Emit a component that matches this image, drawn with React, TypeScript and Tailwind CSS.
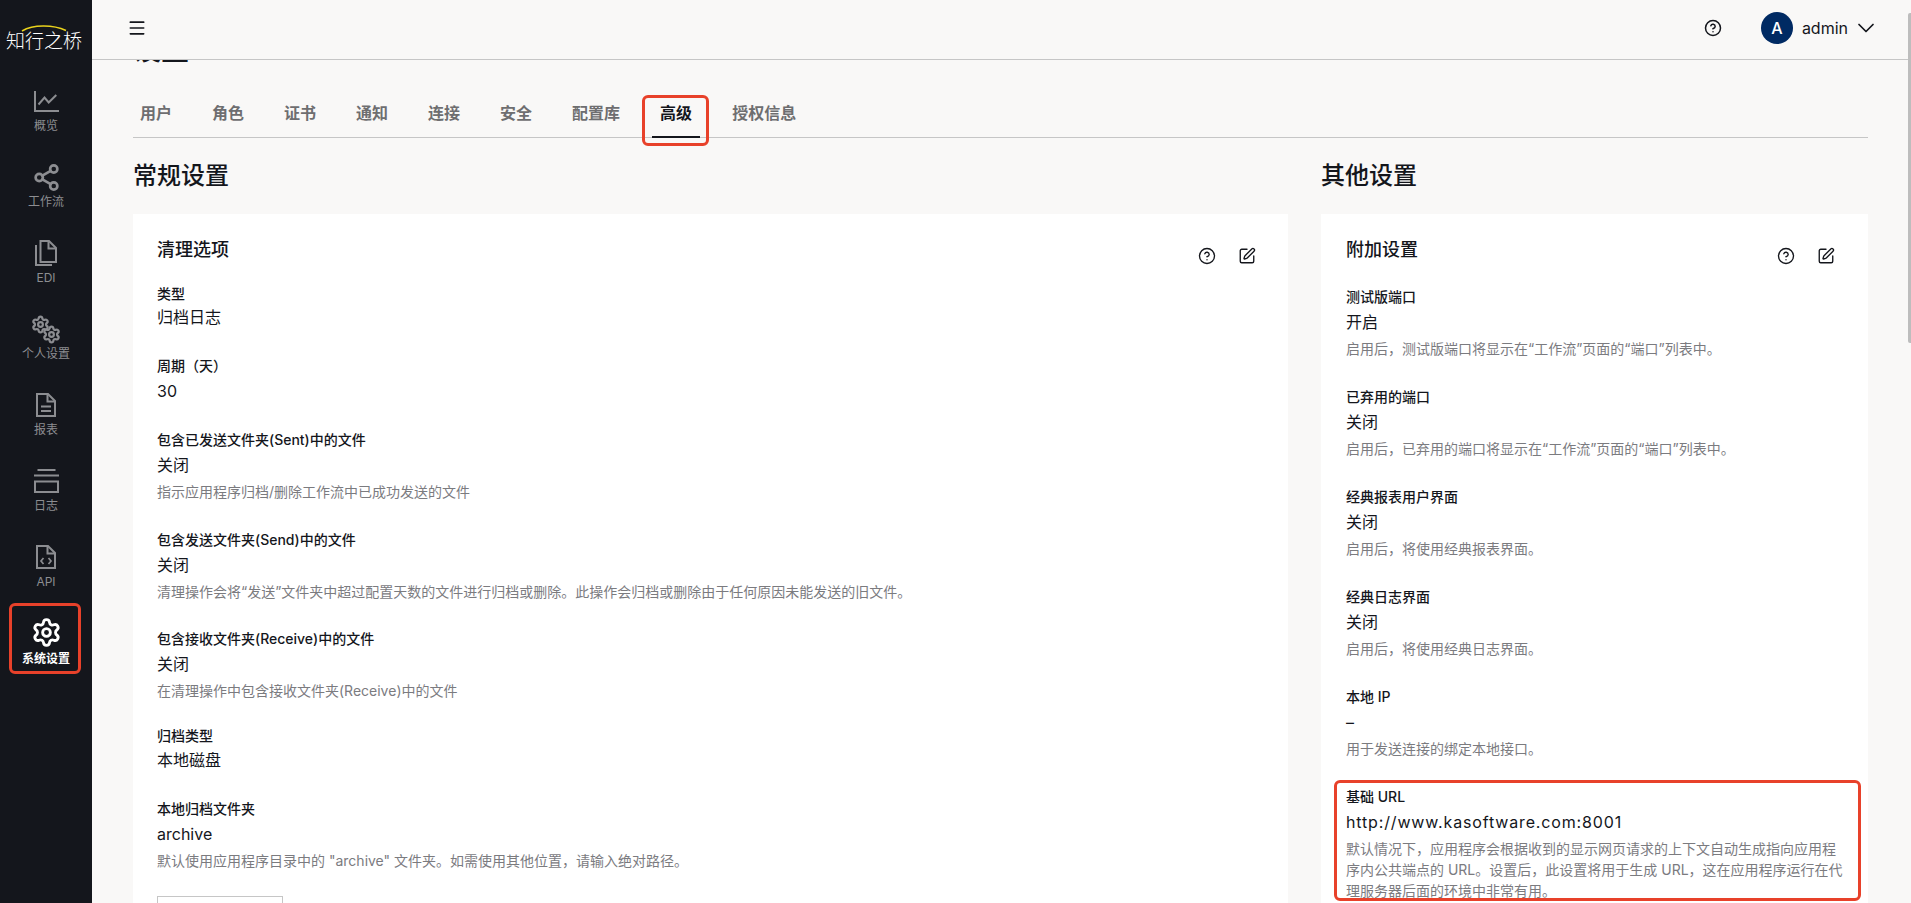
import { ChevronDown, CircleHelp, Menu, Settings, Share2, SquarePen } from "lucide-react";
import type { ReactNode } from "react";

const FONT = "font-['Inter','Noto_Sans_CJK_SC',sans-serif]";

const ChartIcon = () => (
  <svg width="25" height="21" viewBox="0 0 25 21" fill="none" stroke="currentColor" strokeWidth="2">
    <path d="M1 0v20h24" />
    <path d="M4.500 13.500l6-7 4.200 5 7.600-7.500" />
  </svg>
);

const FilesIcon = () => (
  <svg width="22" height="26" viewBox="0 0 22 26" fill="none" stroke="currentColor" strokeWidth="2">
    <path d="M5.500 1h8.500l7 7v14H5.500z" />
    <path d="M13.500 1v7.500H21" />
    <path d="M1 5v20h16" />
  </svg>
);

const GearsIcon = () => (
  <svg width="30" height="29" viewBox="0 0 30 29" fill="none">
    <Settings x={0} y={0} size={19} strokeWidth={2.800} />
    <Settings x={11} y={10} size={19} strokeWidth={2.800} />
  </svg>
);

const ReportIcon = () => (
  <svg width="20" height="24" viewBox="0 0 20 24" fill="none" stroke="currentColor" strokeWidth="2">
    <path d="M1 1h11l7 7v15H1z" />
    <path d="M11.500 1v7.500H19" />
    <path d="M5 13.500h10M5 18h10" />
  </svg>
);

const LogIcon = () => (
  <svg width="25" height="24" viewBox="0 0 25 24" fill="none" stroke="currentColor" strokeWidth="2">
    <path d="M3.500 1h18M0 6.500h25" />
    <path d="M1 12.500h23V23H1z" />
  </svg>
);

const ApiIcon = () => (
  <svg width="20" height="24" viewBox="0 0 20 24" fill="none" stroke="currentColor" strokeWidth="2">
    <path d="M1 1h11l7 7v15H1z" />
    <path d="M7.500 13l-2.500 3 2.500 3M12.500 13l2.500 3-2.500 3" strokeWidth="1.700" />
    <path d="M11.500 1v7.500H19" />
  </svg>
);

const NAV: { label: string; icon: ReactNode }[] = [
  { label: "概览", icon: <ChartIcon /> },
  { label: "工作流", icon: <Share2 size={29} strokeWidth={2.200} /> },
  { label: "EDI", icon: <FilesIcon /> },
  { label: "个人设置", icon: <GearsIcon /> },
  { label: "报表", icon: <ReportIcon /> },
  { label: "日志", icon: <LogIcon /> },
  { label: "API", icon: <ApiIcon /> },
];

const TABS = ["用户", "角色", "证书", "通知", "连接", "安全", "配置库", "高级", "授权信息"];

const Sidebar = () => (
  <aside className="flex h-full w-[92px] shrink-0 flex-col items-center bg-[#14161c]">
    <div className="relative flex h-[85px] w-full shrink-0 justify-center pt-[28px] pr-[4px]">
      <svg className="absolute top-[24px] left-[21px]" width="46" height="8" viewBox="0 0 46 8" fill="none">
        <path d="M1 7C12 0.500 32 0.500 45 6.500" stroke="#e9d21c" strokeWidth="1.500" />
      </svg>
      <span className="text-[19px] leading-[28px] font-light whitespace-nowrap text-white">知行之桥</span>
    </div>
    {NAV.map((item) => (
      <div key={item.label} className="flex h-[76px] w-full shrink-0 flex-col items-center text-[#8c8d91]">
        <div className="flex h-[32px] w-full items-center justify-center">{item.icon}</div>
        <span className="mt-[1px] text-[12px] leading-[16px] whitespace-nowrap">{item.label}</span>
      </div>
    ))}
    <div className="relative -mt-[14px] flex h-[70px] w-full shrink-0 flex-col items-center pt-[14px] text-white">
      <Settings size={31} strokeWidth={2.200} />
      <span className="mt-[3px] text-[12px] leading-[16px] font-bold whitespace-nowrap">系统设置</span>
      <div className="absolute top-0 left-[9px] h-[71px] w-[72px] rounded-[6px] border-[3px] border-[#e8412a]" />
    </div>
  </aside>
);

const Header = () => (
  <header className="flex h-[60px] shrink-0 items-center border-b border-[#c6c6c6] bg-[#f9f8f7] pr-[31px] pb-[4px] pl-[35px]">
    <Menu size={20} strokeWidth={2} className="text-[#14161c]" />
    <CircleHelp size={18} strokeWidth={2} className="mr-[39px] ml-auto text-[#14161c]" />
    <div className="mr-[9px] flex size-[32px] items-center justify-center rounded-full bg-[#002a63] text-[16px] font-medium text-white">
      A
    </div>
    <span className="mr-[4px] text-[16px] text-[#14161c]">admin</span>
    <ChevronDown size={28} strokeWidth={1.500} className="text-[#14161c]" />
  </header>
);

type FieldProps = {
  label: string;
  value: string;
  desc?: ReactNode;
  next: string;
  valueCls?: string;
};

const Field = ({ label, value, desc, next, valueCls = "mt-[3px]" }: FieldProps) => (
  <div className={next}>
    <div className="text-[14px] leading-[20px] font-medium text-[#14161c]">{label}</div>
    <div className={`text-[16px] leading-[24px] text-[#14161c] ${valueCls}`}>{value}</div>
    {desc && <div className="mt-[4px] text-[14px] leading-[21px] text-[#7b7b7f]">{desc}</div>}
  </div>
);

const CardHead = ({ title, mb }: { title: string; mb: string }) => (
  <div className={`flex justify-between pr-[8px] ${mb}`}>
    <h3 className="text-[18px] leading-[28px] font-medium text-[#14161c]">{title}</h3>
    <div className="mt-[11px] flex gap-[22px] text-[#14161c]">
      <CircleHelp size={18} strokeWidth={1.800} />
      <SquarePen size={18} strokeWidth={1.800} />
    </div>
  </div>
);

const App = () => (
  <div className={`flex h-[903px] w-[1911px] overflow-hidden bg-[#f9f8f7] ${FONT}`}>
    <Sidebar />
    <div className="relative flex min-w-0 flex-1 flex-col">
      <Header />
      <main className="min-h-0 flex-1 overflow-hidden pr-[43px] pl-[41px]">
        <h1 className="-mt-[24px] h-[58px] text-[28px] leading-[28px] font-medium text-[#14161c]">设置</h1>
        <nav className="flex h-[44px] gap-[24px] border-b border-[#c6c6c6]">
          {TABS.map((tab) =>
            tab === "高级" ? (
              <div key={tab} className="relative h-[44px] border-b-2 border-[#14161c] px-[8px] text-[16px] leading-[38px] font-bold text-[#14161c]">
                {tab}
                <div className="absolute top-[1px] -right-[9px] -bottom-[10px] -left-[10px] rounded-[6px] border-[3px] border-[#e8412a]" />
              </div>
            ) : (
              <div key={tab} className="px-[8px] text-[16px] leading-[38px] font-bold text-[#6e6e70] first:-ml-[1px]">
                {tab}
              </div>
            ),
          )}
        </nav>
        <div className="mt-[20px] flex gap-[33px]">
          <section className="w-[1155px] shrink-0">
            <h2 className="mb-[20px] text-[24px] leading-[36px] font-medium text-[#14161c]">常规设置</h2>
            <div className="h-[800px] bg-white px-[24px] pt-[22px]">
              <CardHead title="清理选项" mb="mb-[19px]" />
              <Field label="类型" value="归档日志" valueCls="mt-[1px]" next="mb-[27px]" />
              <Field label="周期（天）" value="30" next="mb-[27px]" />
              <Field label="包含已发送文件夹(Sent)中的文件" value="关闭" desc="指示应用程序归档/删除工作流中已成功发送的文件" next="mb-[28px]" />
              <Field label="包含发送文件夹(Send)中的文件" value="关闭" desc="清理操作会将“发送”文件夹中超过配置天数的文件进行归档或删除。此操作会归档或删除由于任何原因未能发送的旧文件。" next="mb-[27px]" />
              <Field label="包含接收文件夹(Receive)中的文件" value="关闭" desc="在清理操作中包含接收文件夹(Receive)中的文件" next="mb-[25px]" />
              <Field label="归档类型" value="本地磁盘" valueCls="mt-[2px]" next="mb-[27px]" />
              <Field label="本地归档文件夹" value="archive" desc={'默认使用应用程序目录中的 "archive" 文件夹。如需使用其他位置，请输入绝对路径。'} next="mb-[25px]" />
              <div className="h-[40px] w-[126px] border border-[#c6c6c6]" />
            </div>
          </section>
          <section className="min-w-0 flex-1">
            <h2 className="mb-[20px] text-[24px] leading-[36px] font-medium text-[#14161c]">其他设置</h2>
            <div className="h-[800px] bg-white px-[25px] pt-[22px]">
              <CardHead title="附加设置" mb="mb-[22px]" />
              <Field label="测试版端口" value="开启" desc="启用后，测试版端口将显示在“工作流”页面的“端口”列表中。" next="mb-[28px]" />
              <Field label="已弃用的端口" value="关闭" desc="启用后，已弃用的端口将显示在“工作流”页面的“端口”列表中。" next="mb-[28px]" />
              <Field label="经典报表用户界面" value="关闭" desc="启用后，将使用经典报表界面。" next="mb-[28px]" />
              <Field label="经典日志界面" value="关闭" desc="启用后，将使用经典日志界面。" next="mb-[28px]" />
              <Field label="本地 IP" value="–" desc="用于发送连接的绑定本地接口。" next="mb-[28px]" />
              <div className="relative">
                <Field
                  label="基础 URL"
                  value="http://www.kasoftware.com:8001"
                  valueCls="mt-[3px] tracking-[0.85px]"
                  desc="默认情况下，应用程序会根据收到的显示网页请求的上下文自动生成指向应用程序内公共端点的 URL。设置后，此设置将用于生成 URL，这在应用程序运行在代理服务器后面的环境中非常有用。"
                  next=""
                />
                <div className="absolute -top-[7px] -right-[18px] h-[121px] -left-[12px] rounded-[6px] border-[3px] border-[#e8412a]" />
              </div>
            </div>
          </section>
        </div>
      </main>
      <div className="absolute top-[13px] right-0 h-[330px] w-[3px] rounded-l-[2px] bg-[#bdbdbd]" />
    </div>
  </div>
);

export default App;
